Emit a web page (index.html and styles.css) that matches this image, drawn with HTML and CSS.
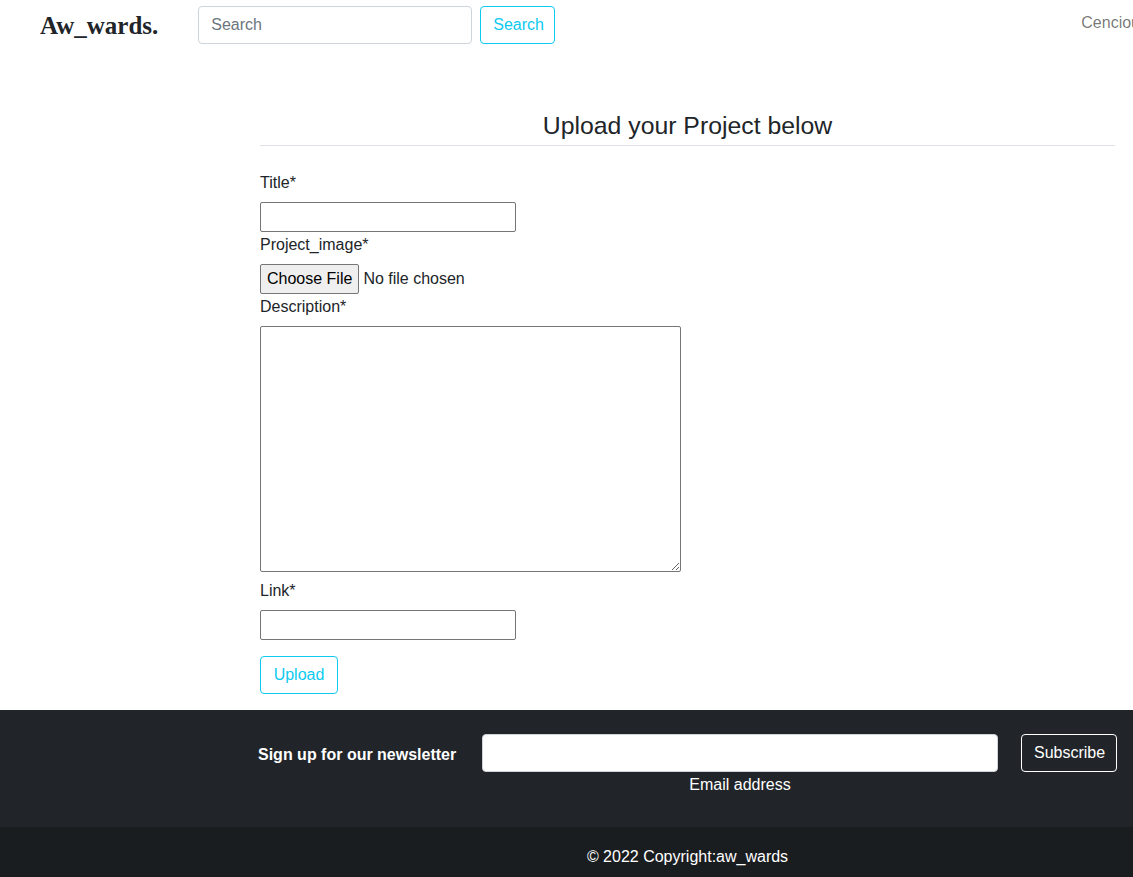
FILE: index.html
```html
<!DOCTYPE html>
<html lang="en">
<head>
<meta charset="utf-8">
<title>Aw_wards - Upload</title>
<link rel="stylesheet" href="styles.css">
</head>
<body>
<nav class="navbar">
  <a class="brand" href="#">Aw_wards.</a>
  <form class="search-form">
    <input class="search-input" type="search" placeholder="Search">
    <button class="btn btn-info search-btn" type="button">Search</button>
  </form>
  <a class="nav-user" href="#">Cenciouz</a>
</nav>

<main class="content">
  <h4 class="page-title">Upload your Project below</h4>
  <hr class="rule">
  <form class="upload-form">
    <label class="field-label" for="title">Title*</label>
    <input class="text-field" id="title" type="text">
    <label class="field-label" for="image">Project_image*</label>
    <input class="file-field" id="image" type="file">
    <label class="field-label" for="desc">Description*</label>
    <textarea class="area-field" id="desc"></textarea>
    <label class="field-label" for="link">Link*</label>
    <input class="text-field" id="link" type="text">
    <button class="btn btn-info upload-btn" type="button">Upload</button>
  </form>
</main>

<footer class="footer">
  <section class="newsletter">
    <div class="news-row">
      <p class="news-label">Sign up for our newsletter</p>
      <div class="news-field">
        <input class="news-input" type="email">
        <span class="news-hint">Email address</span>
      </div>
      <button class="btn btn-light" type="button">Subscribe</button>
    </div>
  </section>
  <div class="copyright">
    <div class="copy-inner">© 2022 Copyright:aw_wards</div>
  </div>
</footer>
</body>
</html>
```

FILE: styles.css
```css
* { box-sizing: border-box; }
html, body { margin: 0; padding: 0; }
body {
  font-family: "Liberation Sans", Arial, sans-serif;
  font-size: 16px;
  line-height: 1.5;
  color: #212529;
  background: #fff;
  overflow-x: hidden;
}
a { text-decoration: none; }

/* navbar */
.navbar {
  display: flex;
  align-items: center;
  height: 50px;
  padding: 0 0 0 40px;
  overflow: hidden;
  white-space: nowrap;
}
.brand {
  font-family: "Liberation Serif", "Times New Roman", serif;
  font-weight: bold;
  font-size: 25px;
  color: #212529;
  line-height: 1;
  margin-top: 0;
}
.search-form {
  display: flex;
  margin-left: 40px;
  gap: 8px;
  margin-top: -1px;
}
.search-input {
  width: 274px;
  height: 38px;
  border: 1px solid #ced4da;
  border-radius: 4px;
  padding: 6px 12px;
  font: inherit;
  color: #212529;
  outline: none;
}
.search-input::placeholder { color: #6c757d; }
.btn {
  font: inherit;
  height: 38px;
  padding: 6px 12px;
  border-radius: 4px;
  background: transparent;
  cursor: pointer;
}
.btn-info {
  color: #0dcaf0;
  border: 1px solid #0dcaf0;
}
.search-btn { width: 75px; }
.nav-user {
  margin-left: 526px;
  color: rgba(0, 0, 0, 0.55);
  margin-top: -4px;
}

/* main */
.content {
  margin-left: 260px;
  width: 855px;
  padding-top: 61px;
  padding-bottom: 16px;
}
.page-title {
  font-size: 24.8px;
  font-weight: 400;
  line-height: 30px;
  text-align: center;
  margin: 0 0 4px;
}
.rule {
  border: 0;
  border-top: 1px solid #dee2e6;
  margin: 0;
}
.upload-form {
  display: flex;
  flex-direction: column;
  align-items: flex-start;
  padding-top: 24px;
}
.field-label {
  display: block;
  padding-top: 1px;
  margin-bottom: 7px;
}
.text-field {
  width: 256px;
  height: 30px;
  border: 1px solid #767676;
  border-radius: 2px;
  font: inherit;
  padding: 1px 2px;
}
.file-field {
  font: inherit;
  height: 30px;
  line-height: 1.5;
}
.file-field::file-selector-button {
  font: inherit;
  height: 30px;
  padding: 1px 6px;
  margin-right: 4px;
  border: 1px solid #767676;
  border-radius: 2px;
  background: #efefef;
  color: #000;
}
.area-field {
  width: 421px;
  height: 246px;
  border: 1px solid #767676;
  border-radius: 2px;
  font: inherit;
  margin-bottom: 6px;
  resize: both;
}
.upload-btn {
  margin-top: 16px;
  width: 78px;
}

/* footer */
.footer { background: #212529; color: #fff; }
.newsletter { padding: 24px 0 30px; }
.news-row {
  margin-left: 258px;
  width: 859px;
  display: flex;
  align-items: flex-start;
}
.news-label {
  margin: 0;
  font-weight: bold;
  height: 38px;
  line-height: 38px;
  padding-top: 2px;
  width: 224px;
}
.news-field {
  display: flex;
  flex-direction: column;
  align-items: center;
  width: 516px;
}
.news-input {
  width: 516px;
  height: 38px;
  border: 1px solid #ced4da;
  border-radius: 4px;
  background: #fff;
  font: inherit;
}
.news-hint { line-height: 24px; margin-top: 1px; }
.btn-light {
  margin-left: auto;
  width: 96px;
  color: #fff;
  border: 1px solid #fff;
}
.copyright {
  background: rgba(0, 0, 0, 0.2);
  height: 50px;
}
.copy-inner {
  margin-left: 260px;
  width: 855px;
  text-align: center;
  line-height: 24px;
  padding-top: 18px;
}
```
